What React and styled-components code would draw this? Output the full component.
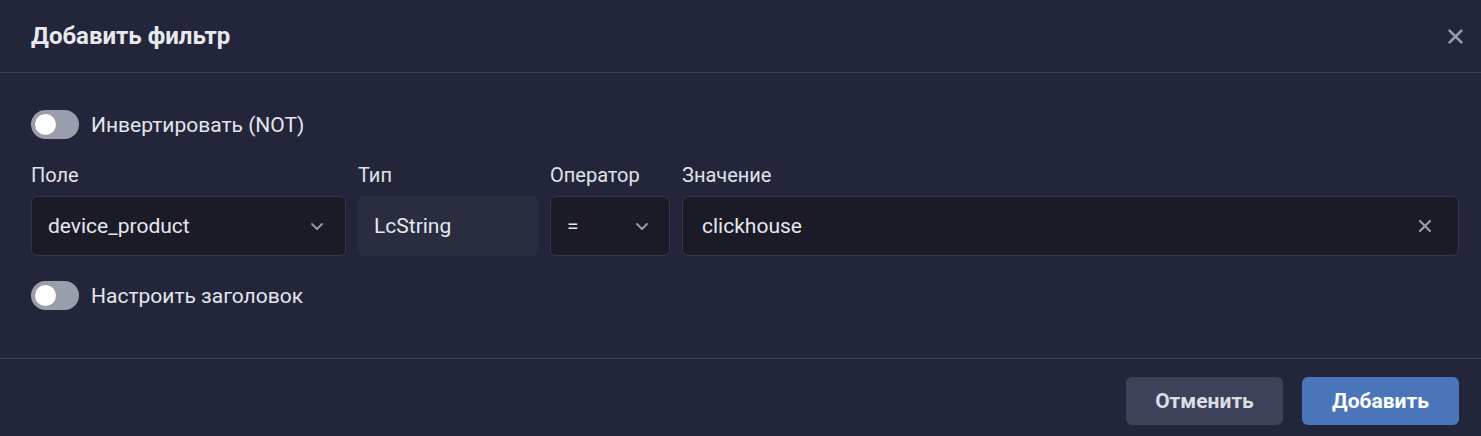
import React, { useState } from 'react';
import styled, { createGlobalStyle } from 'styled-components';

const GlobalStyle = createGlobalStyle`
  html, body {
    margin: 0;
    padding: 0;
    background: #23263a;
  }
  body {
    font-family: Roboto, "Noto Sans", "Liberation Sans", sans-serif;
    color: #e6e7ee;
  }
`;

const Modal = styled.div`
  width: 1481px;
  height: 436px;
  background: #23263a;
  display: flex;
  flex-direction: column;
  overflow: hidden;
`;

const Header = styled.div`
  height: 73px;
  box-sizing: border-box;
  display: flex;
  align-items: center;
  justify-content: space-between;
  padding: 0 14px 0 31px;
  border-bottom: 1px solid #3a3d57;
`;

const Title = styled.h2`
  margin: 0;
  font-size: 24px;
  font-weight: 700;
  color: #e8e9ef;
`;

const CloseButton = styled.button`
  background: none;
  border: none;
  padding: 0;
  width: 24px;
  height: 24px;
  display: flex;
  align-items: center;
  justify-content: center;
  color: #9a9db0;
  cursor: pointer;
`;

const Body = styled.div`
  padding: 37px 22px 0 31px;
  display: flex;
  flex-direction: column;
  height: 286px;
  box-sizing: border-box;
  border-bottom: 1px solid #3a3d57;
`;

const ToggleRow = styled.label`
  display: flex;
  align-items: center;
  gap: 12px;
  font-size: 21px;
  color: #e4e5ec;
  cursor: pointer;
  margin-top: ${p => p.$mt || 0}px;
`;

const Track = styled.span`
  width: 48px;
  height: 29px;
  border-radius: 15px;
  background: #9a9dac;
  position: relative;
  flex-shrink: 0;
`;

const Knob = styled.span`
  position: absolute;
  top: 4px;
  left: ${p => (p.$on ? 23 : 4)}px;
  width: 21px;
  height: 21px;
  border-radius: 50%;
  background: #ffffff;
`;

const Fields = styled.div`
  display: grid;
  grid-template-columns: 315px 180px 120px 1fr;
  column-gap: 12px;
  margin-top: 24px;
`;

const Field = styled.div`
  display: flex;
  flex-direction: column;
  gap: 9px;
`;

const Label = styled.span`
  font-size: 20px;
  color: #e1e2ea;
  line-height: 24px;
`;

const Box = styled.div`
  height: 60px;
  box-sizing: border-box;
  border-radius: 6px;
  border: 1px solid ${p => (p.$readonly ? '#2a2d40' : '#34374c')};
  background: ${p => (p.$readonly ? '#2a2d40' : '#1a1b26')};
  display: flex;
  align-items: center;
  justify-content: space-between;
  padding: 0 ${p => p.$pr || 16}px 0 ${p => p.$pl || 16}px;
  font-size: 21px;
  color: #e6e7ee;
`;

const IconSlot = styled.span`
  display: flex;
  color: #9a9db0;
`;

const Footer = styled.div`
  display: flex;
  justify-content: flex-end;
  gap: 19px;
  padding: 18px 22px 0 0;
`;

const Button = styled.button`
  width: 157px;
  height: 48px;
  border: none;
  border-radius: 6px;
  font-family: inherit;
  font-size: 21px;
  font-weight: 700;
  color: ${p => (p.$primary ? '#ffffff' : '#dcdde5')};
  background: ${p => (p.$primary ? '#4a76b9' : '#3d4159')};
  cursor: pointer;
`;

const Chevron = () => (
  <svg width="16" height="16" viewBox="0 0 16 16" fill="none" stroke="currentColor" strokeWidth="1.8" strokeLinecap="round" strokeLinejoin="round">
    <path d="M3 6l5 5 5-5" />
  </svg>
);

const Cross = ({ size = 16 }) => (
  <svg width={size} height={size} viewBox="0 0 16 16" fill="none" stroke="currentColor" strokeWidth="2.2" strokeLinecap="round">
    <path d="M3 3l10 10M13 3L3 13" />
  </svg>
);

const Toggle = ({ label, mt }) => {
  const [on, setOn] = useState(false);
  return (
    <ToggleRow $mt={mt} onClick={() => setOn(!on)}>
      <Track>
        <Knob $on={on} />
      </Track>
      {label}
    </ToggleRow>
  );
};

export default function App() {
  return (
    <>
      <GlobalStyle />
      <Modal>
        <Header>
          <Title>Добавить фильтр</Title>
          <CloseButton aria-label="close">
            <Cross size={19} />
          </CloseButton>
        </Header>
        <Body>
          <Toggle label="Инвертировать (NOT)" />
          <Fields>
            <Field>
              <Label>Поле</Label>
              <Box $pr={20}>
                device_product
                <IconSlot><Chevron /></IconSlot>
              </Box>
            </Field>
            <Field>
              <Label>Тип</Label>
              <Box $readonly $pl={15}>LcString</Box>
            </Field>
            <Field>
              <Label>Оператор</Label>
              <Box $pr={19}>
                =
                <IconSlot><Chevron /></IconSlot>
              </Box>
            </Field>
            <Field>
              <Label>Значение</Label>
              <Box $pl={19} $pr={25}>
                clickhouse
                <IconSlot><Cross size={16} /></IconSlot>
              </Box>
            </Field>
          </Fields>
          <Toggle label="Настроить заголовок" mt={25} />
        </Body>
        <Footer>
          <Button>Отменить</Button>
          <Button $primary>Добавить</Button>
        </Footer>
      </Modal>
    </>
  );
}
